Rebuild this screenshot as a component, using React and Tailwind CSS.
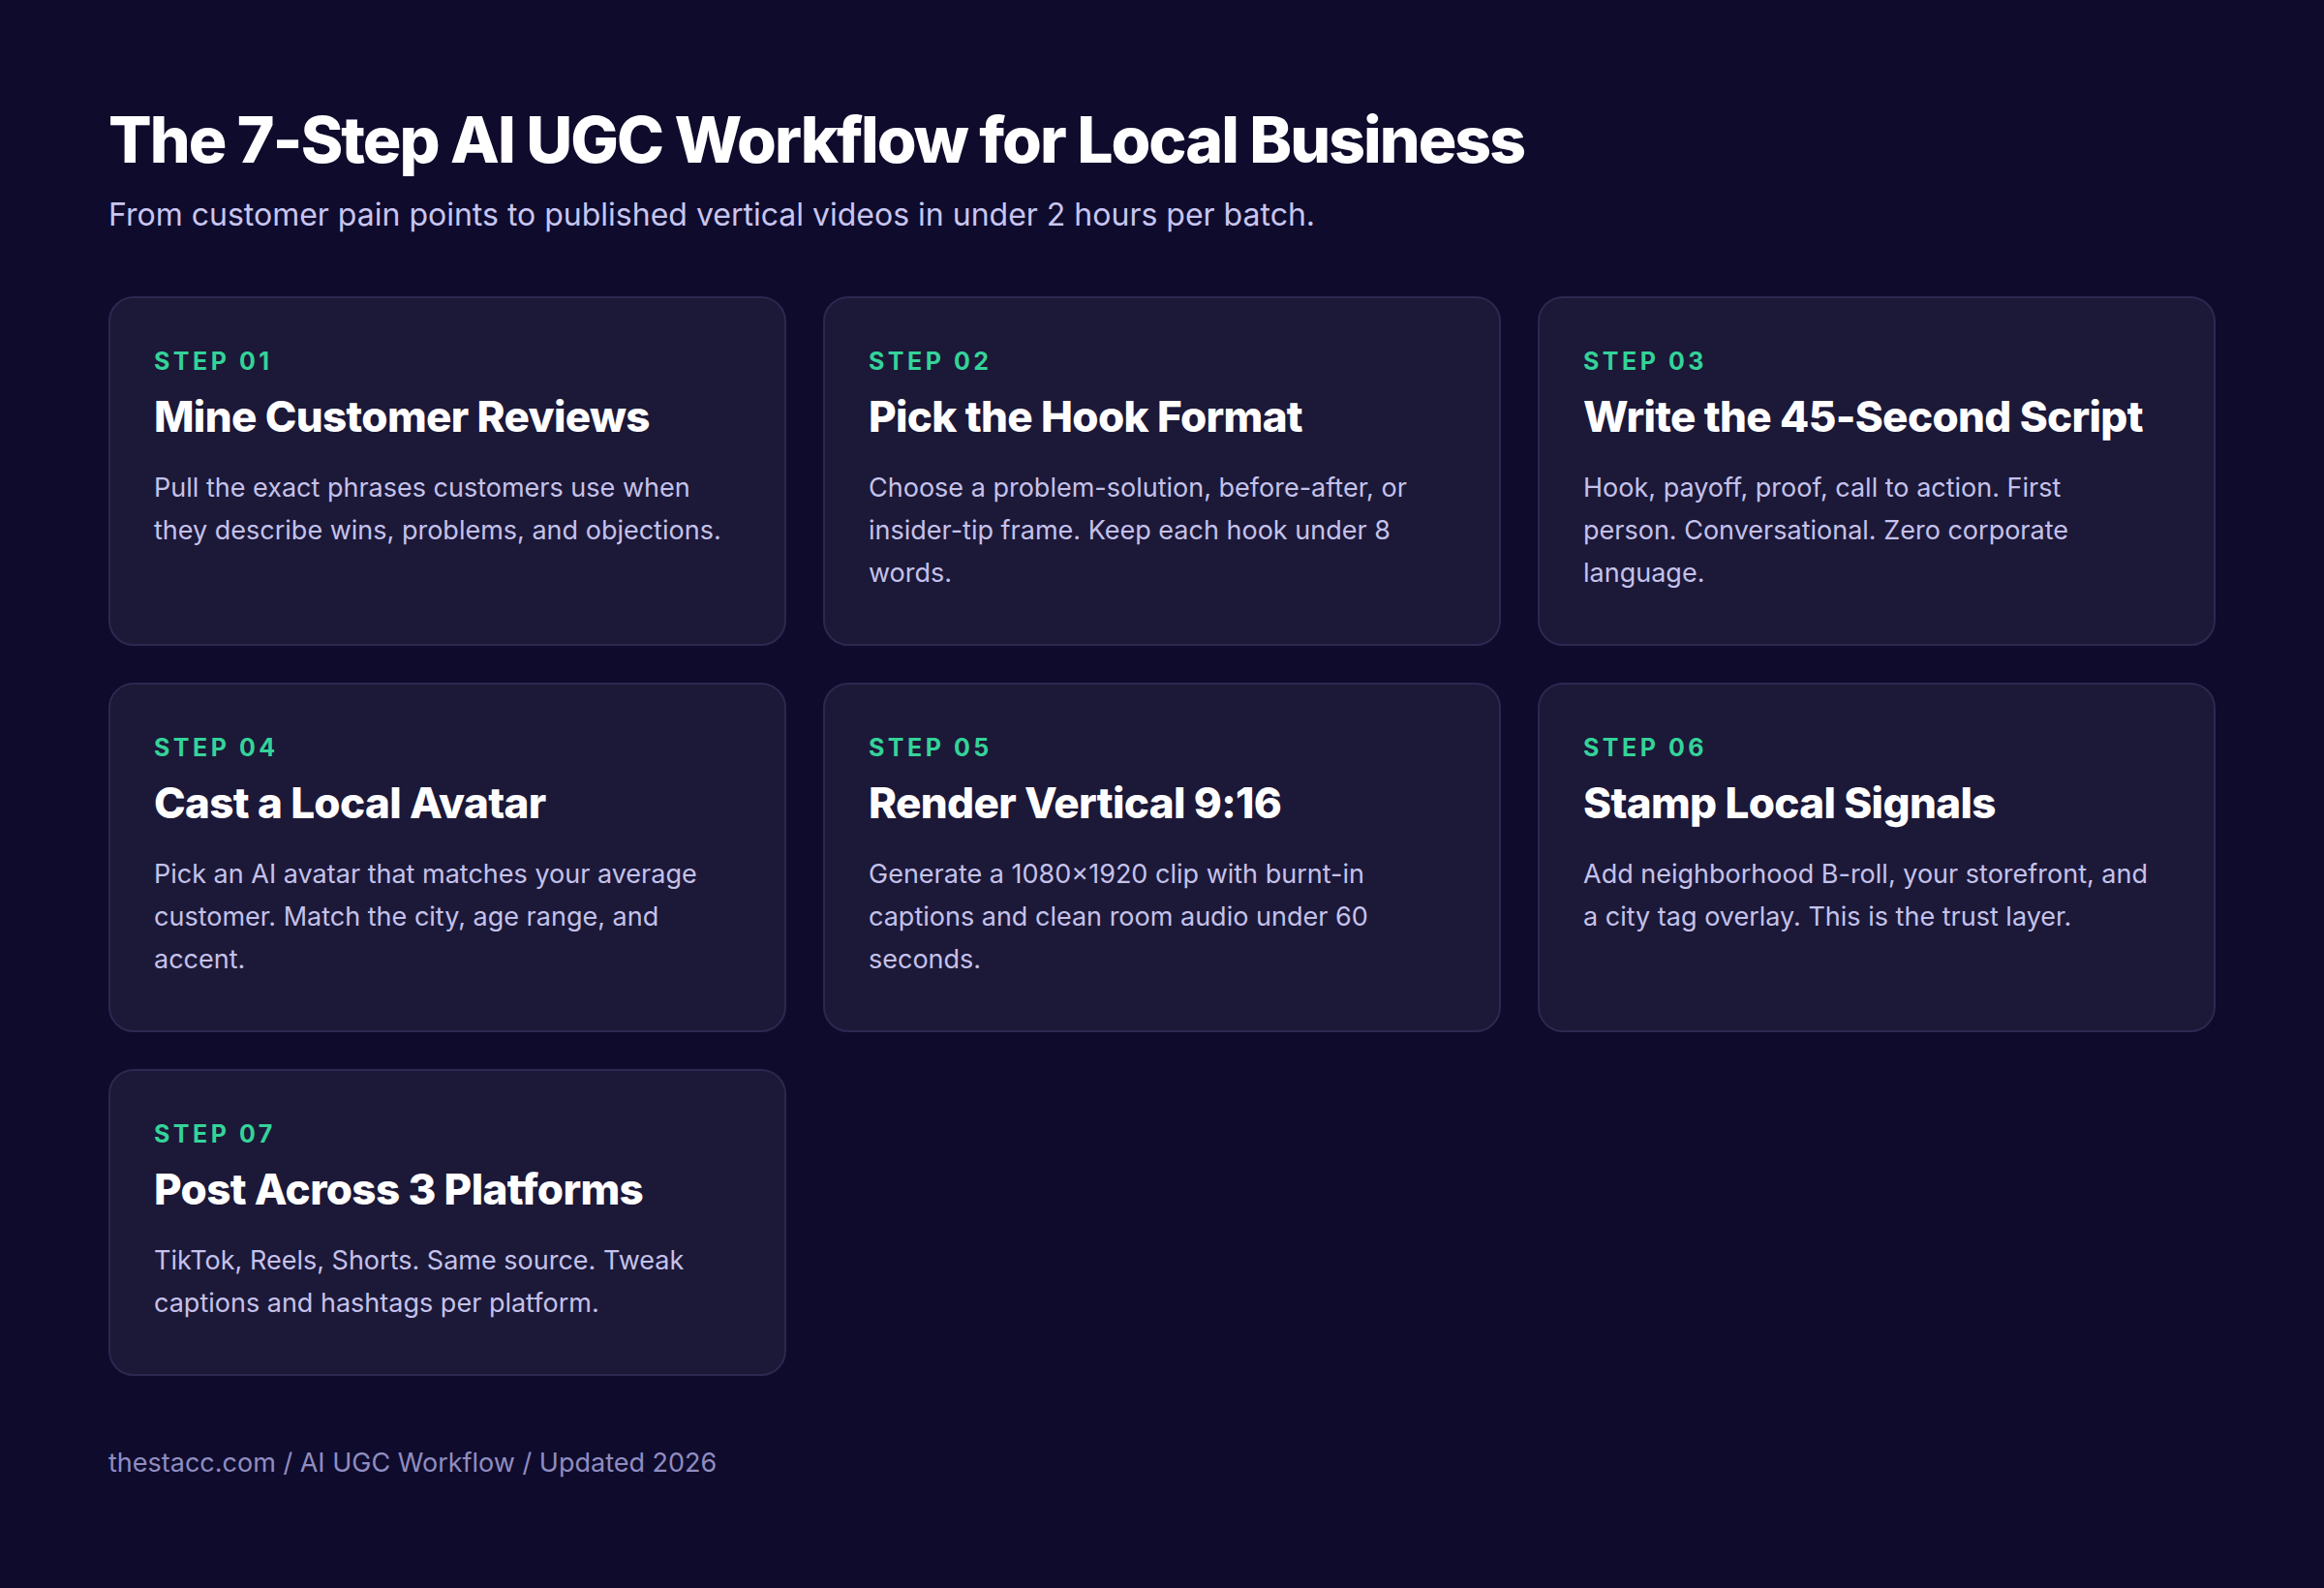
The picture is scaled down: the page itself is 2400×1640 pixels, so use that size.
const steps = [
  ["01", "Mine Customer Reviews", "Pull the exact phrases customers use when they describe wins, problems, and objections."],
  ["02", "Pick the Hook Format", "Choose a problem-solution, before-after, or insider-tip frame. Keep each hook under 8 words."],
  ["03", "Write the 45-Second Script", "Hook, payoff, proof, call to action. First person. Conversational. Zero corporate language."],
  ["04", "Cast a Local Avatar", "Pick an AI avatar that matches your average customer. Match the city, age range, and accent."],
  ["05", "Render Vertical 9:16", "Generate a 1080×1920 clip with burnt-in captions and clean room audio under 60 seconds."],
  ["06", "Stamp Local Signals", "Add neighborhood B-roll, your storefront, and a city tag overlay. This is the trust layer."],
  ["07", "Post Across 3 Platforms", "TikTok, Reels, Shorts. Same source. Tweak captions and hashtags per platform."],
];

export default function App() {
  return (
    <div className="min-h-[1640px] w-[2400px] bg-[#0f0b2d] px-[112px] pt-[103px] font-[Inter,sans-serif]">
      <h1 className="text-[66px] font-extrabold leading-[83px] tracking-[-0.03em] text-white">
        The 7-Step AI UGC Workflow for Local Business
      </h1>
      <p className="mt-[14px] text-[32px] leading-[44px] text-[#c8c6f0]">
        From customer pain points to published vertical videos in under 2 hours per batch.
      </p>
      <div className="mt-[62px] grid w-[2176px] grid-cols-3 gap-[38px]">
        {steps.map(([n, title, body]) => (
          <div
            key={n}
            className="rounded-[26px] border-2 border-[#2c2850] bg-[#1c1838] pl-[45px] pr-[60px] pt-[51px] pb-[51px]"
          >
            <div className="text-[25px] font-bold leading-[28px] tracking-[0.14em] text-[#34d399]">
              STEP {n}
            </div>
            <h2 className="mt-[18px] text-[44px] font-extrabold leading-[50px] tracking-[-0.015em] text-white">
              {title}
            </h2>
            <p className="mt-[27px] text-[27px] leading-[44px] text-[#c4c2ea]">{body}</p>
          </div>
        ))}
      </div>
      <div className="mt-[70px] text-[27px] leading-[40px] text-[#908dc0]">
        thestacc.com / AI UGC Workflow / Updated 2026
      </div>
    </div>
  );
}
